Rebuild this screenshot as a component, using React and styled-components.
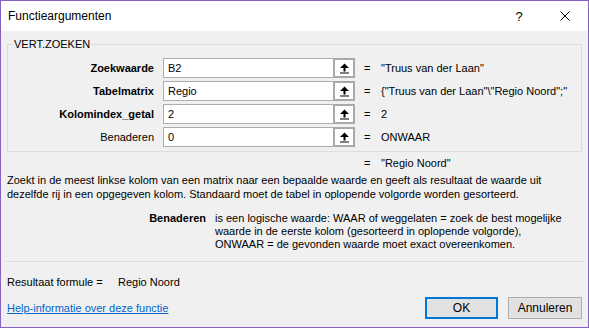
import React from "react";
import styled, { createGlobalStyle } from "styled-components";

const GlobalStyle = createGlobalStyle`
  html, body { margin: 0; padding: 0; background: #ffffff; }
  body { font-family: "Liberation Sans", Arial, sans-serif; color: #000; }
  * { box-sizing: border-box; }
`;

const Window = styled.div`
  width: 589px;
  height: 328px;
  border: 1px solid #8661c5;
  background: #f0f0f0;
  display: flex;
  flex-direction: column;
  font-size: 11px;
`;

const TitleBar = styled.div`
  height: 30px;
  flex: none;
  background: #ffffff;
  display: flex;
  align-items: center;
  padding-left: 7px;
`;

const TitleText = styled.div`
  flex: 1;
  font-size: 12px;
`;

const CaptionButton = styled.div`
  width: 46px;
  height: 30px;
  display: flex;
  align-items: center;
  justify-content: center;
  font-size: 13px;
`;

const Body = styled.div`
  flex: 1;
  display: flex;
  flex-direction: column;
  padding: 0 6px;
`;

const Group = styled.fieldset`
  margin: 7px 0 0 0;
  border: 1px solid #dcdcdc;
  padding: 7px 0 4px 0;
  min-width: 0;
`;

const GroupTitle = styled.legend`
  margin-left: 5px;
  padding: 0 1px;
  font-size: 11px;
  line-height: 13px;
`;

const ArgGrid = styled.div`
  display: grid;
  grid-template-columns: 146px 192px 1fr;
  column-gap: 9px;
  row-gap: 3px;
  align-items: center;
`;

const ArgLabel = styled.div`
  text-align: right;
  font-weight: ${(p) => (p.$required ? "bold" : "normal")};
  white-space: nowrap;
`;

const Field = styled.div`
  display: flex;
  height: 20px;
`;

const TextInput = styled.div`
  width: 170px;
  height: 20px;
  border: 1px solid #adadad;
  border-right: none;
  background: #ffffff;
  padding-left: 4px;
  display: flex;
  align-items: center;
`;

const CollapseButton = styled.div`
  width: 22px;
  height: 20px;
  border: 2px solid #a9a9a9;
  background: #ffffff;
  display: flex;
  align-items: center;
  justify-content: center;
`;

const ValueCell = styled.div`
  display: flex;
  white-space: nowrap;
`;

const Eq = styled.span`
  width: 17px;
  flex: none;
`;

const ResultLine = styled.div`
  margin: 5px 0 0 357px;
  line-height: 13px;
  display: flex;
`;

const Description = styled.div`
  margin-top: 3px;
  line-height: 14px;
`;

const ArgHelp = styled.div`
  margin-top: 11px;
  display: grid;
  grid-template-columns: 199px 1fr;
  column-gap: 9px;
  line-height: 13px;
`;

const ArgHelpName = styled.div`
  text-align: right;
  font-weight: bold;
`;

const Separator = styled.div`
  margin: 10px -1px 0;
  height: 1px;
  background: #dadada;
`;

const FormulaResult = styled.div`
  margin-top: 14px;
  line-height: 13px;
  display: flex;
`;

const FormulaLabel = styled.span`
  width: 111px;
`;

const Footer = styled.div`
  margin-top: 8px;
  display: flex;
  align-items: center;
`;

const HelpLink = styled.a`
  flex: 1;
  color: #0066cc;
  text-decoration: underline;
  cursor: pointer;
`;

const Button = styled.button`
  width: ${(p) => p.$w}px;
  height: 22px;
  margin-left: 10px;
  background: #e1e1e1;
  border: ${(p) => (p.$default ? "2px solid #0078d7" : "1px solid #adadad")};
  font-family: "Liberation Sans", Arial, sans-serif;
  font-size: 12px;
  color: #000;
  padding: 0;
`;

const UpArrow = () => (
  <svg width="11" height="11" viewBox="0 0 11 11">
    <path d="M5.5 0.5 L1 5 L4.5 5 L4.5 8.5 L6.5 8.5 L6.5 5 L10 5 Z" fill="#000" />
    <rect x="1" y="9.5" width="9" height="1" fill="#000" />
  </svg>
);

const CloseIcon = () => (
  <svg width="10" height="10" viewBox="0 0 10 10">
    <path d="M0.5 0.5 L9.5 9.5 M9.5 0.5 L0.5 9.5" stroke="#000" strokeWidth="1" fill="none" />
  </svg>
);

const args = [
  { name: "Zoekwaarde", required: true, input: "B2", value: '"Truus van der Laan"' },
  { name: "Tabelmatrix", required: true, input: "Regio", value: '{"Truus van der Laan"\\"Regio Noord";"' },
  { name: "Kolomindex_getal", required: true, input: "2", value: "2" },
  { name: "Benaderen", required: false, input: "0", value: "ONWAAR" },
];

export default function App() {
  return (
    <>
      <GlobalStyle />
      <Window>
        <TitleBar>
          <TitleText>Functieargumenten</TitleText>
          <CaptionButton>?</CaptionButton>
          <CaptionButton>
            <CloseIcon />
          </CaptionButton>
        </TitleBar>
        <Body>
          <Group>
            <GroupTitle>VERT.ZOEKEN</GroupTitle>
            <ArgGrid>
              {args.map((a) => (
                <React.Fragment key={a.name}>
                  <ArgLabel $required={a.required}>{a.name}</ArgLabel>
                  <Field>
                    <TextInput>{a.input}</TextInput>
                    <CollapseButton>
                      <UpArrow />
                    </CollapseButton>
                  </Field>
                  <ValueCell>
                    <Eq>=</Eq>
                    <span>{a.value}</span>
                  </ValueCell>
                </React.Fragment>
              ))}
            </ArgGrid>
          </Group>
          <ResultLine>
            <Eq>=</Eq>
            <span>"Regio Noord"</span>
          </ResultLine>
          <Description>
            Zoekt in de meest linkse kolom van een matrix naar een bepaalde waarde en geeft als resultaat de waarde uit
            <br />
            dezelfde rij in een opgegeven kolom. Standaard moet de tabel in oplopende volgorde worden gesorteerd.
          </Description>
          <ArgHelp>
            <ArgHelpName>Benaderen</ArgHelpName>
            <div>
              is een logische waarde: WAAR of weggelaten = zoek de best mogelijke
              <br />
              waarde in de eerste kolom (gesorteerd in oplopende volgorde),
              <br />
              ONWAAR = de gevonden waarde moet exact overeenkomen.
            </div>
          </ArgHelp>
          <Separator />
          <FormulaResult>
            <FormulaLabel>Resultaat formule =</FormulaLabel>
            <span>Regio Noord</span>
          </FormulaResult>
          <Footer>
            <HelpLink>Help-informatie over deze functie</HelpLink>
            <Button $default $w={73}>OK</Button>
            <Button $w={74}>Annuleren</Button>
          </Footer>
        </Body>
      </Window>
    </>
  );
}
